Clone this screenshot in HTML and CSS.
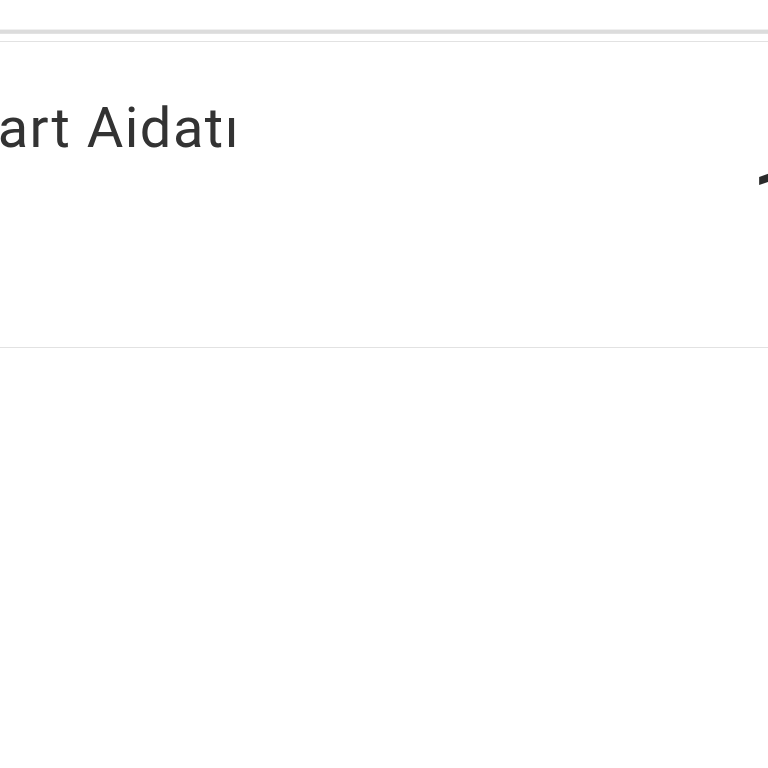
FILE: index.html
```html
<!DOCTYPE html>
<html>
<head>
<meta charset="utf-8">
<link rel="stylesheet" href="styles.css">
</head>
<body>
<div class="topbar"></div>
<div class="row">
  <div class="title">Kart Aidatı</div>
  <div class="amount">1</div>
</div>
</body>
</html>
```
FILE: styles.css
```css
html, body {
  margin: 0;
  padding: 0;
  background: #ffffff;
  width: 768px;
  height: 768px;
  overflow: hidden;
  font-family: Roboto, "Noto Sans", sans-serif;
}
.topbar {
  height: 29px;
  border-bottom: 1px solid #f0f0f0;
  box-shadow: 0 1px 0 #dcdcdc, 0 2px 0 #dcdcdc, 0 3px 0 #dcdcdc, 0 4px 0 #e2e2e2;
}
.row {
  margin-top: 11px;
  height: 305px;
  border-top: 1px solid #e2e2e2;
  border-bottom: 1px solid #e2e2e2;
  display: flex;
  justify-content: space-between;
  align-items: flex-start;
  overflow: hidden;
}
.title {
  margin-left: -39px;
  margin-top: 54px;
  font-size: 56px;
  letter-spacing: 1.5px;
  line-height: 64px;
  color: #333333;
  white-space: nowrap;
}
.amount {
  margin-top: 112px;
  margin-right: -30px;
  font-size: 80px;
  line-height: 90px;
  font-weight: 500;
  color: #2b2b2b;
}
```
